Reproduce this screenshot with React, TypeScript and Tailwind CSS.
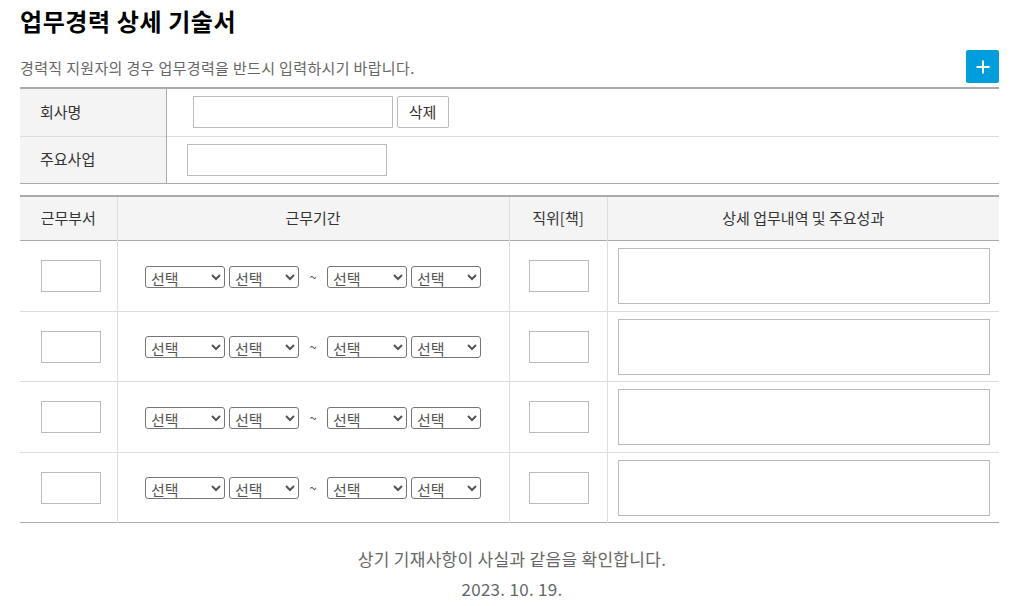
import React from 'react';

const font = { fontFamily: '"Noto Sans CJK KR", "Noto Sans", sans-serif' };

const PeriodSelect: React.FC<{ wide?: boolean }> = ({ wide }) => (
    <select
        className={`${wide ? 'w-[80px]' : 'w-[70px]'} h-[22px] border border-[#767676] rounded-[3px] bg-white text-[15px] leading-none text-[#555] px-[1px]`}
        style={font}
        defaultValue=""
    >
        <option value="">선택</option>
    </select>
);

const CareerRow: React.FC<{ last?: boolean; tall?: boolean }> = ({ last, tall }) => (
    <tr className={`${tall ? 'h-[71px]' : 'h-[70px]'} ${last ? 'border-b border-[#aaa]' : 'border-b border-[#ddd]'}`}>
        <td className="border-r border-[#ddd] text-center pl-[5px]">
            <input className="w-[60px] h-[32px] border border-[#bbb] align-middle" />
        </td>
        <td className="border-r border-[#ddd]">
            <div className="flex items-center justify-center gap-[4px] pt-[1px]">
                <PeriodSelect wide />
                <PeriodSelect />
                <span className="w-[20px] text-center text-[13px] text-[#555]">~</span>
                <PeriodSelect wide />
                <PeriodSelect />
            </div>
        </td>
        <td className="border-r border-[#ddd] text-center pl-[2px]">
            <input className="w-[60px] h-[32px] border border-[#bbb] align-middle" />
        </td>
        <td className="px-[10px]">
            <textarea className="block w-[372px] h-[56px] border border-[#bbb] resize-none" />
        </td>
    </tr>
);

export default function App() {
    return (
        <div className="w-[1024px] h-[606px] bg-white px-[20px] pt-[3px] text-[#333]" style={font}>
            <h2 className="text-[24px] font-bold text-black leading-[36px] tracking-[0.6px]">업무경력 상세 기술서</h2>

            <div className="w-[979px] flex items-end justify-between mt-[11px] mb-[4px]">
                <p className="text-[15px] text-[#666] leading-[20px] mb-[5px] tracking-[0.35px]">경력직 지원자의 경우 업무경력을 반드시 입력하시기 바랍니다.</p>
                <button className="w-[33px] h-[33px] bg-[#009ddc] rounded-[2px] flex items-center justify-center">
                    <svg width="16" height="16" viewBox="0 0 16 16">
                        <path d="M8 1.5v13M1.5 8h13" stroke="#fff" strokeWidth="2" />
                    </svg>
                </button>
            </div>

            <table className="w-[979px] border-collapse border-t-2 border-[#aaa] text-[15px]">
                <tbody>
                    <tr className="h-[48px] border-b border-[#ddd]">
                        <th className="w-[146px] bg-[#f4f4f4] border-r border-[#aaa] text-left font-normal pl-[20px] text-[#333]">회사명</th>
                        <td className="pl-[26px]">
                            <div className="flex items-center gap-[4px]">
                                <input className="w-[200px] h-[32px] border border-[#bbb]" />
                                <button className="w-[52px] h-[32px] border border-[#bbb] rounded-[2px] bg-white text-[15px] text-[#333]">삭제</button>
                            </div>
                        </td>
                    </tr>
                    <tr className="h-[47px] border-b border-[#aaa]">
                        <th className="bg-[#f4f4f4] border-r border-[#aaa] text-left font-normal pl-[20px] text-[#333]">주요사업</th>
                        <td className="pl-[20px]">
                            <input className="w-[200px] h-[32px] border border-[#bbb] block" />
                        </td>
                    </tr>
                </tbody>
            </table>

            <table className="w-[979px] mt-[11px] border-collapse border-t-2 border-[#aaa] text-[15px] table-fixed">
                <colgroup>
                    <col className="w-[97px]" />
                    <col className="w-[392px]" />
                    <col className="w-[98px]" />
                    <col className="w-[392px]" />
                </colgroup>
                <thead>
                    <tr className="h-[45px] bg-[#f4f4f4] border-b border-[#aaa]">
                        <th className="font-normal border-r border-[#ddd] text-[#333]">근무부서</th>
                        <th className="font-normal border-r border-[#ddd] text-[#333]">근무기간</th>
                        <th className="font-normal border-r border-[#ddd] text-[#333]">직위[책]</th>
                        <th className="font-normal text-[#333]">상세 업무내역 및 주요성과</th>
                    </tr>
                </thead>
                <tbody>
                    <CareerRow tall />
                    <CareerRow />
                    <CareerRow tall />
                    <CareerRow last />
                </tbody>
            </table>

            <div className="text-center text-[17px] text-[#666] mt-[21px] leading-[30px] tracking-[0.3px]">
                <p>상기 기재사항이 사실과 같음을 확인합니다.</p>
                <p>2023. 10. 19.</p>
            </div>
        </div>
    );
}
